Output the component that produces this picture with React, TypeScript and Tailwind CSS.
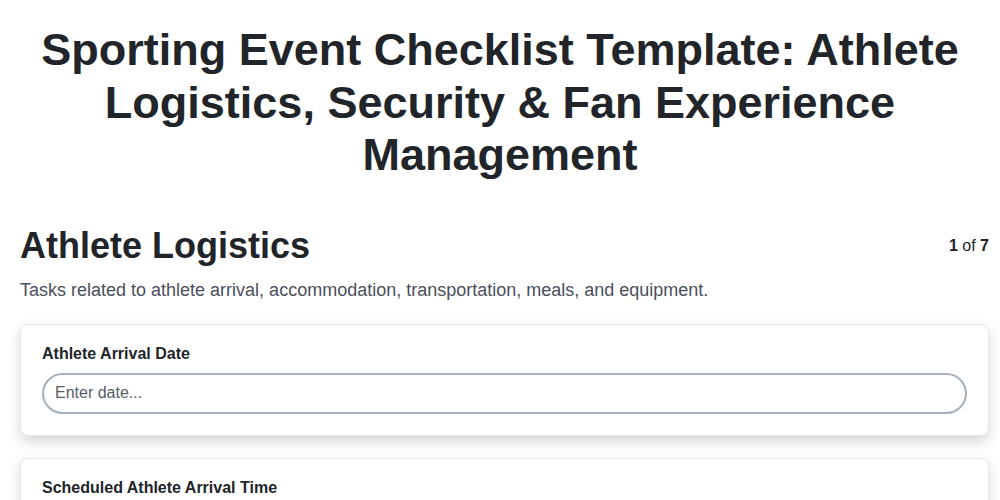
import React from "react";

const fields = [
  { label: "Athlete Arrival Date", placeholder: "Enter date..." },
  { label: "Scheduled Athlete Arrival Time", placeholder: "Enter time..." },
  { label: "Accommodation Hotel", placeholder: "Enter text..." },
];

function FieldCard({ label, placeholder }: { label: string; placeholder: string }) {
  return (
    <div className="rounded-lg border border-[#e6e6ee] bg-white px-[21px] pt-[19px] pb-[21px] shadow-[0_6px_14px_rgba(0,0,0,0.16)]">
      <label className="mb-[9px] block text-[16px] font-bold leading-[20px] text-[#212529]">{label}</label>
      <input
        type="text"
        placeholder={placeholder}
        className="h-[41px] w-full rounded-full border-2 border-[#a6b0ba] bg-white px-[11px] text-[16px] text-[#212529] placeholder:text-[#555c66] outline-none"
      />
    </div>
  );
}

export default function App() {
  return (
    <div className="min-h-screen bg-white pt-6 font-['Liberation_Sans',Arial,sans-serif] text-[#212529]">
      <h1 className="px-5 text-center text-[45px] font-bold leading-[52.5px]">
        Sporting Event Checklist Template: Athlete Logistics, Security &amp; Fan Experience Management
      </h1>

      <section className="mt-[42px] pl-5 pr-[11px]">
        <div className="flex items-start justify-between">
          <h2 className="text-[36px] font-bold leading-[43px]">Athlete Logistics</h2>
          <div className="mt-[10px] text-[16px]">
            <span className="font-bold">1</span> of <span className="font-bold">7</span>
          </div>
        </div>
        <p className="mt-[10px] text-[18px] leading-[26px] text-[#4a4f5c]">
          Tasks related to athlete arrival, accommodation, transportation, meals, and equipment.
        </p>

        <div className="mt-[21px] flex flex-col gap-[22px]">
          {fields.map((f) => (
            <FieldCard key={f.label} label={f.label} placeholder={f.placeholder} />
          ))}
        </div>
      </section>
    </div>
  );
}
